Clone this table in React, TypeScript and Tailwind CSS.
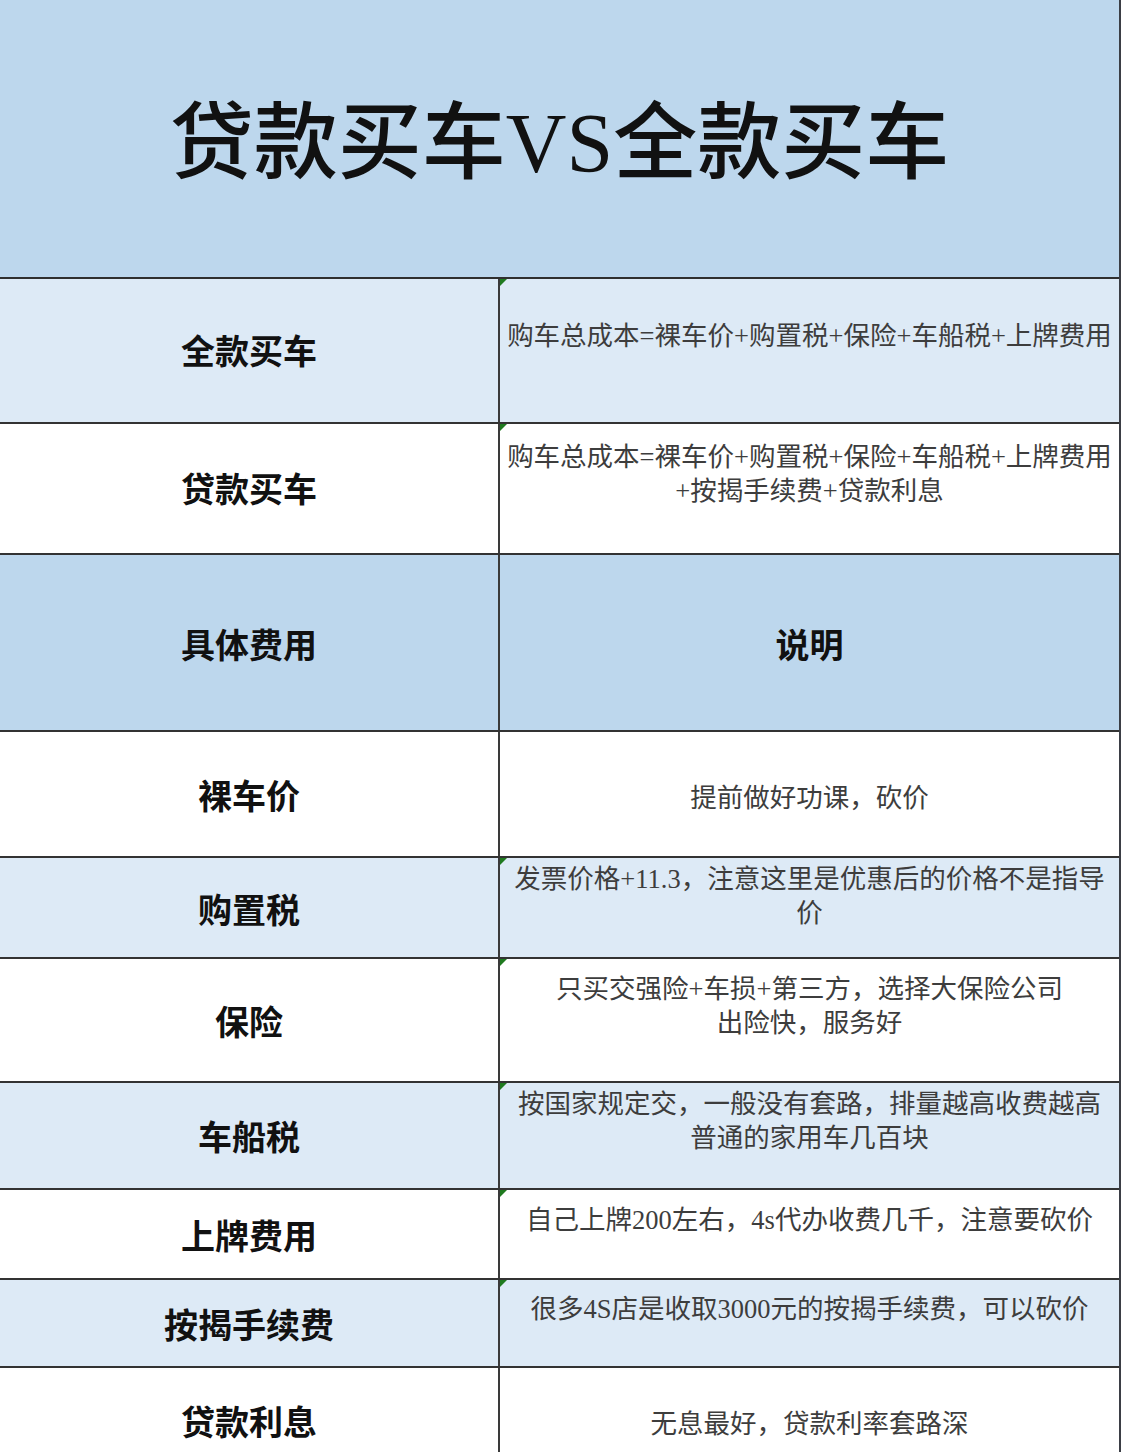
import React from 'react';

type Row = {
  label: string;
  lines: string[];
  height: string;
  bg: string;
  labelTop: string;
  textTop: string;
  mark?: boolean;
  heading?: boolean;
};

const rows: Row[] = [
  {
    label: '全款买车',
    lines: ['购车总成本=裸车价+购置税+保险+车船税+上牌费用'],
    height: 'h-[145px]',
    bg: 'bg-[#ddeaf6]',
    labelTop: 'pt-[54px]',
    textTop: 'pt-[40px]',
    mark: true,
  },
  {
    label: '贷款买车',
    lines: ['购车总成本=裸车价+购置税+保险+车船税+上牌费用', '+按揭手续费+贷款利息'],
    height: 'h-[131px]',
    bg: 'bg-white',
    labelTop: 'pt-[47px]',
    textTop: 'pt-[16px]',
    mark: true,
  },
  {
    label: '具体费用',
    lines: ['说明'],
    height: 'h-[177px]',
    bg: 'bg-[#bdd7ed]',
    labelTop: 'pt-[72px]',
    textTop: 'pt-[72px]',
    heading: true,
  },
  {
    label: '裸车价',
    lines: ['提前做好功课，砍价'],
    height: 'h-[126px]',
    bg: 'bg-white',
    labelTop: 'pt-[46px]',
    textTop: 'pt-[49px]',
  },
  {
    label: '购置税',
    lines: ['发票价格+11.3，注意这里是优惠后的价格不是指导', '价'],
    height: 'h-[101px]',
    bg: 'bg-[#ddeaf6]',
    labelTop: 'pt-[34px]',
    textTop: 'pt-[4px]',
    mark: true,
  },
  {
    label: '保险',
    lines: ['只买交强险+车损+第三方，选择大保险公司', '出险快，服务好'],
    height: 'h-[124px]',
    bg: 'bg-white',
    labelTop: 'pt-[45px]',
    textTop: 'pt-[13px]',
    mark: true,
  },
  {
    label: '车船税',
    lines: ['按国家规定交，一般没有套路，排量越高收费越高', '普通的家用车几百块'],
    height: 'h-[107px]',
    bg: 'bg-[#ddeaf6]',
    labelTop: 'pt-[36px]',
    textTop: 'pt-[4px]',
    mark: true,
  },
  {
    label: '上牌费用',
    lines: ['自己上牌200左右，4s代办收费几千，注意要砍价'],
    height: 'h-[90px]',
    bg: 'bg-white',
    labelTop: 'pt-[28px]',
    textTop: 'pt-[13px]',
    mark: true,
  },
  {
    label: '按揭手续费',
    lines: ['很多4S店是收取3000元的按揭手续费，可以砍价'],
    height: 'h-[88px]',
    bg: 'bg-[#ddeaf6]',
    labelTop: 'pt-[27px]',
    textTop: 'pt-[12px]',
    mark: true,
  },
  {
    label: '贷款利息',
    lines: ['无息最好，贷款利率套路深'],
    height: 'h-[100px]',
    bg: 'bg-white',
    labelTop: 'pt-[36px]',
    textTop: 'pt-[39px]',
  },
];

const CornerMark = () => (
  <svg className="absolute left-0 top-0" width="7" height="7" viewBox="0 0 7 7">
    <polygon points="0,0 7,0 0,7" fill="#1f7a1f" />
  </svg>
);

export default function App() {
  return (
    <div className="min-h-[1452px] w-[1125px] overflow-hidden bg-white font-['Liberation_Serif','Noto_Sans_CJK_SC',serif]">
      <div className="w-[1121px] border-r-2 border-[#3b3e45]">
        <div className="flex h-[279px] items-center justify-center border-b-2 border-[#2f2f2f] bg-[#bdd7ed]">
          <h1 className="mt-[10px] text-[84px] font-medium leading-none text-[#111]">
            贷款买车VS全款买车
          </h1>
        </div>

        {rows.map((row) => (
          <div
            key={row.label}
            className={`flex ${row.height} border-b-2 border-[#333] ${row.bg}`}
          >
            <div
              className={`w-[500px] shrink-0 border-r-2 border-[#3a3a3a] text-center text-[34px] font-semibold leading-[40px] text-[#111] ${row.labelTop}`}
            >
              {row.label}
            </div>
            <div
              className={`relative flex-1 text-center ${row.textTop} ${
                row.heading
                  ? 'text-[34px] font-semibold leading-[40px] text-[#111]'
                  : 'whitespace-nowrap text-[26.5px] leading-[34px] text-[#3d3d3d]'
              }`}
            >
              {row.mark && <CornerMark />}
              {row.lines.map((line) => (
                <div key={line}>{line}</div>
              ))}
            </div>
          </div>
        ))}
      </div>
    </div>
  );
}
